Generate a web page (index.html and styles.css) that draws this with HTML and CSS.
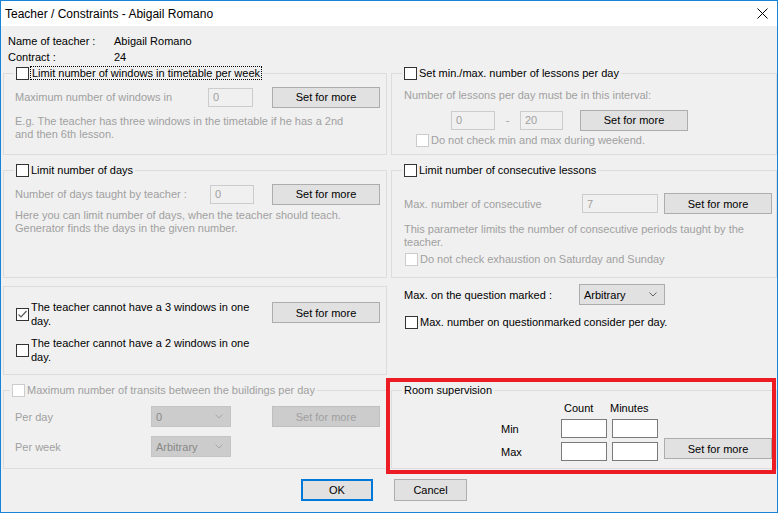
FILE: index.html
```html
<!DOCTYPE html>
<html lang="en">
<head>
    <meta charset="UTF-8">
    <title>Teacher / Constraints - Abigail Romano</title>
    <link rel="stylesheet" href="styles.css">
</head>
<body>
    <div class="window">
        <div class="titlebar">
            <span>Teacher / Constraints - Abigail Romano</span>
            <svg class="close" width="11" height="11" viewBox="0 0 11 11"><path d="M0.5 0.5L10.5 10.5M10.5 0.5L0.5 10.5" stroke="#000" stroke-width="1" fill="none"/></svg>
        </div>
        <div class="body">
            <div class="info">
                <span>Name of teacher :</span><span>Abigail Romano</span>
                <span>Contract :</span><span>24</span>
            </div>

            <div class="groups">
                <!-- windows per week -->
                <fieldset class="group grp-windows">
                    <legend><span class="cb"></span><span class="focus">Limit number of windows in timetable per week</span></legend>
                    <div class="pad">
                        <div class="field-row">
                            <span class="lbl dim">Maximum number of windows in</span>
                            <input class="edit" type="text" value="0" disabled>
                            <button class="btn">Set for more</button>
                        </div>
                        <div class="desc dim">E.g. The teacher has three windows in the timetable if he has a 2nd<br>and then 6th lesson.</div>
                    </div>
                </fieldset>

                <!-- lessons per day -->
                <fieldset class="group grp-lessons">
                    <legend><span class="cb"></span><span>Set min./max. number of lessons per day</span></legend>
                    <div class="pad">
                        <div class="text-line dim">Number of lessons per day must be in this interval:</div>
                        <div class="field-row">
                            <input class="edit edit-min" type="text" value="0" disabled>
                            <span class="dash dim">-</span>
                            <input class="edit edit-max" type="text" value="20" disabled>
                            <button class="btn">Set for more</button>
                        </div>
                        <div class="check-row indent">
                            <span class="cb off"></span><span class="dim">Do not check min and max during weekend.</span>
                        </div>
                    </div>
                </fieldset>

                <!-- number of days -->
                <fieldset class="group grp-days">
                    <legend><span class="cb"></span><span>Limit number of days</span></legend>
                    <div class="pad">
                        <div class="field-row">
                            <span class="lbl dim">Number of days taught by teacher :</span>
                            <input class="edit" type="text" value="0" disabled>
                            <button class="btn">Set for more</button>
                        </div>
                        <div class="desc dim">Here you can limit number of days, when the teacher should teach.<br>Generator finds the days in the given number.</div>
                    </div>
                </fieldset>

                <!-- consecutive lessons -->
                <fieldset class="group grp-consec">
                    <legend><span class="cb"></span><span>Limit number of consecutive lessons</span></legend>
                    <div class="pad">
                        <div class="field-row">
                            <span class="lbl dim">Max. number of consecutive</span>
                            <input class="edit" type="text" value="7" disabled>
                            <button class="btn">Set for more</button>
                        </div>
                        <div class="desc dim">This parameter limits the number of consecutive periods taught by the<br>teacher.</div>
                        <div class="check-row">
                            <span class="cb off"></span><span class="dim">Do not check exhaustion on Saturday and Sunday</span>
                        </div>
                    </div>
                </fieldset>

                <!-- windows in one day -->
                <div class="box grp-oneday">
                    <div class="item-row">
                        <div class="check-item">
                            <span class="cb checked"><svg width="11" height="11" viewBox="0 0 11 11"><path d="M1.5 5.5L4 8L9.5 2" stroke="#5a5a5a" stroke-width="1.2" fill="none"/></svg></span>
                            <span class="wrap">The teacher cannot have a 3 windows in one<br>day.</span>
                        </div>
                        <button class="btn">Set for more</button>
                    </div>
                    <div class="item-row second">
                        <div class="check-item">
                            <span class="cb"></span>
                            <span class="wrap">The teacher cannot have a 2 windows in one<br>day.</span>
                        </div>
                    </div>
                </div>

                <!-- question marked -->
                <div class="side">
                    <div class="field-row">
                        <span class="lbl">Max. on the question marked :</span>
                        <div class="select">
                            <span>Arbitrary</span>
                            <svg width="8" height="5" viewBox="0 0 8 5"><path d="M0.5 0.5L4 4L7.5 0.5" stroke="#606060" fill="none"/></svg>
                        </div>
                    </div>
                    <div class="check-row">
                        <span class="cb"></span><span>Max. number on questionmarked consider per day.</span>
                    </div>
                </div>

                <!-- transits -->
                <fieldset class="group grp-transits">
                    <legend><span class="cb off"></span><span class="dim">Maximum number of transits between the buildings per day</span></legend>
                    <div class="pad">
                        <div class="field-row">
                            <span class="lbl dim">Per day</span>
                            <div class="select off">
                                <span>0</span>
                                <svg width="8" height="5" viewBox="0 0 8 5"><path d="M0.5 0.5L4 4L7.5 0.5" stroke="#a8a8a8" fill="none"/></svg>
                            </div>
                            <button class="btn off">Set for more</button>
                        </div>
                        <div class="field-row">
                            <span class="lbl dim">Per week</span>
                            <div class="select off">
                                <span>Arbitrary</span>
                                <svg width="8" height="5" viewBox="0 0 8 5"><path d="M0.5 0.5L4 4L7.5 0.5" stroke="#a8a8a8" fill="none"/></svg>
                            </div>
                        </div>
                    </div>
                </fieldset>

                <!-- room supervision -->
                <div class="room-wrap">
                    <fieldset class="group grp-room">
                        <legend><span>Room supervision</span></legend>
                        <div class="room-grid">
                            <span class="col-count">Count</span>
                            <span class="col-minutes">Minutes</span>
                            <span class="row-lbl">Min</span>
                            <input class="edit white" type="text">
                            <input class="edit white" type="text">
                            <button class="btn room-btn">Set for more</button>
                            <span class="row-lbl">Max</span>
                            <input class="edit white" type="text">
                            <input class="edit white" type="text">
                        </div>
                    </fieldset>
                </div>
            </div>

            <div class="footer">
                <button class="btn ok">OK</button>
                <button class="btn cancel">Cancel</button>
            </div>
        </div>
    </div>
</body>
</html>
```

FILE: styles.css
```css
*,
*::before,
*::after {
    box-sizing: border-box;
}

body {
    margin: 0;
    font-family: "Liberation Sans", Arial, sans-serif;
    font-size: 11px;
    color: #000;
    background: #fff;
}

.window {
    width: 778px;
    height: 513px;
    border: 1px solid #1883d7;
    display: flex;
    flex-direction: column;
    background: #f0f0f0;
}

.titlebar {
    height: 25px;
    flex: none;
    background: #fff;
    display: flex;
    align-items: center;
    justify-content: space-between;
    padding: 0 9px 0 4px;
    font-size: 12px;
}

.body {
    flex: 1;
}

.info {
    display: grid;
    grid-template-columns: 106px auto;
    line-height: 16px;
    padding: 7px 0 0 7px;
}

.groups {
    display: grid;
    grid-template-columns: 384px 386px;
    grid-template-rows: 89px 115px 89px 86px;
    column-gap: 4px;
    row-gap: 8px;
    margin: 1px 0 0 2px;
}

.group {
    margin: 0;
    padding: 0;
    border: 1px solid #dcdcdc;
    min-width: 0;
}

legend {
    display: flex;
    align-items: center;
    gap: 2px;
    height: 14px;
    padding: 0 2px;
    margin-left: 10px;
    white-space: nowrap;
}

.box {
    border: 1px solid #dcdcdc;
}

.cb {
    width: 13px;
    height: 13px;
    flex: none;
    border: 1px solid #333;
    background: #fff;
    display: flex;
}

.cb.off {
    border-color: #cccccc;
}

.focus {
    outline: 1px dotted #000;
    padding: 0 1px;
}

.dim {
    color: #a0a0a0;
}

.pad {
    padding: 6px 0 0 11px;
}

.field-row {
    display: flex;
    align-items: center;
    height: 22px;
    white-space: nowrap;
}

.lbl {
    flex: none;
}

.edit {
    height: 19px;
    border: 1px solid #cccccc;
    background: #f0f0f0;
    color: #a0a0a0;
    font: inherit;
    padding: 0 4px;
    margin: 0;
    outline: none;
}

.edit.white {
    background: #fff;
    border-color: #7a7a7a;
}

.btn {
    width: 108px;
    height: 21px;
    border: 1px solid #adadad;
    background: #e1e1e1;
    font: inherit;
    color: #000;
    padding: 0;
    margin: 0;
}

.btn.off {
    background: #cccccc;
    border-color: #bfbfbf;
    color: #a0a0a0;
}

.select {
    height: 21px;
    border: 1px solid #adadad;
    background: #e1e1e1;
    display: flex;
    align-items: center;
    justify-content: space-between;
    padding: 0 7px 0 4px;
}

.select.off {
    background: #cccccc;
    border-color: #c4c4c4;
    color: #888888;
}

.desc {
    line-height: 13px;
}

.text-line {
    line-height: 14px;
}

.check-row {
    display: flex;
    align-items: center;
    gap: 2px;
    height: 14px;
    white-space: nowrap;
}

/* windows per week */
.grp-windows .lbl {
    width: 193px;
}

.grp-windows .edit {
    width: 45px;
}

.grp-windows .btn {
    margin-left: 19px;
}

.grp-windows .desc {
    margin-top: 7px;
}

/* lessons per day */
.grp-lessons .pad {
    padding: 8px 0 0 12px;
}

.grp-lessons .field-row {
    margin-top: 7px;
}

.grp-lessons .edit-min {
    width: 44px;
    margin-left: 47px;
}

.grp-lessons .dash {
    width: 25px;
    text-align: center;
}

.grp-lessons .edit-max {
    width: 43px;
}

.grp-lessons .btn {
    margin-left: 17px;
}

.grp-lessons .check-row {
    margin-top: 2px;
    padding-left: 12px;
}

/* number of days */
.grp-days .lbl {
    width: 195px;
}

.grp-days .edit {
    width: 44px;
}

.grp-days .btn {
    margin-left: 18px;
}

.grp-days .desc {
    margin-top: 4px;
}

/* consecutive lessons */
.grp-consec .pad {
    padding: 16px 0 0 12px;
}

.grp-consec .field-row {
    height: 21px;
}

.grp-consec .lbl {
    width: 178px;
}

.grp-consec .edit {
    width: 76px;
}

.grp-consec .btn {
    margin-left: 6px;
}

.grp-consec .desc {
    margin-top: 9px;
}

.grp-consec .check-row {
    margin-top: 3px;
    padding-left: 1px;
}

/* windows in one day */
.grp-oneday {
    padding: 13px 0 0 12px;
}

.item-row {
    display: flex;
    align-items: flex-start;
}

.item-row.second {
    margin-top: 8px;
}

.check-item {
    width: 256px;
    display: flex;
    align-items: center;
    gap: 2px;
}

.wrap {
    line-height: 14px;
    white-space: nowrap;
}

.grp-oneday .btn {
    margin-top: 2px;
}

/* question marked */
.side {
    padding-left: 13px;
}

.side .field-row {
    margin-top: -2px;
    height: 21px;
}

.side .lbl {
    width: 175px;
}

.side .select {
    width: 86px;
}

.side .check-row {
    margin-top: 10px;
    padding-left: 1px;
}

/* transits */
.grp-transits legend {
    margin-left: 6px;
}

.grp-transits .pad {
    padding-top: 9px;
}

.grp-transits .field-row {
    height: 21px;
}

.grp-transits .field-row + .field-row {
    margin-top: 9px;
}

.grp-transits .lbl {
    width: 136px;
}

.grp-transits .select {
    width: 80px;
}

.grp-transits .btn {
    margin-left: 41px;
}

/* room supervision */
.room-wrap {
    position: relative;
    display: flex;
}

.room-wrap::after {
    content: "";
    position: absolute;
    left: -5px;
    top: -5px;
    width: 390px;
    height: 96px;
    border: 4px solid #ed1c24;
    pointer-events: none;
}

.grp-room {
    flex: 1;
}

.room-grid {
    display: grid;
    grid-template-columns: 55px 46px 46px 108px;
    grid-template-rows: 14px 19px 19px;
    column-gap: 5px;
    row-gap: 4px;
    padding: 4px 0 0 109px;
}

.room-grid > span {
    line-height: 14px;
    align-self: center;
    white-space: nowrap;
}

.col-count {
    grid-column: 2;
    padding-left: 3px;
}

.col-minutes {
    grid-column: 3;
    margin-left: -2px;
}

.row-lbl {
    grid-column: 1;
}

.room-grid .edit {
    width: 46px;
}

.room-btn {
    grid-column: 4;
    grid-row: 2 / 4;
    align-self: end;
    margin: 0 0 2px 1px;
}

/* dialog buttons */
.footer {
    display: flex;
    justify-content: center;
    gap: 21px;
    margin-top: 10px;
    padding-right: 10px;
}

.footer .btn {
    height: 22px;
}

.ok {
    width: 72px;
    border: 2px solid #0078d7;
}

.cancel {
    width: 73px;
}
```
